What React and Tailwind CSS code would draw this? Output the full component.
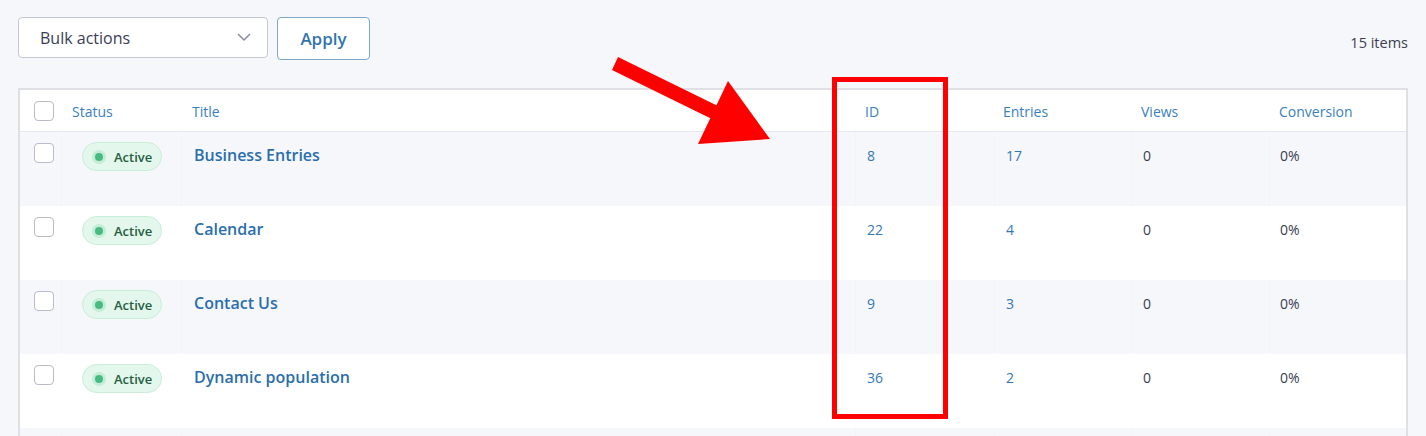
import React from "react";

const rows = [
  { title: "Business Entries", id: 8, entries: 17, views: 0, conversion: "0%" },
  { title: "Calendar", id: 22, entries: 4, views: 0, conversion: "0%" },
  { title: "Contact Us", id: 9, entries: 3, views: 0, conversion: "0%" },
  { title: "Dynamic population", id: 36, entries: 2, views: 0, conversion: "0%" },
];

const cols = "grid grid-cols-[41px_120px_1fr_139px_137px_138px_137px]";

function Checkbox() {
  return (
    <span className="block w-[20px] h-[20px] rounded-[4px] border-[1.5px] border-[#b9bbcc] bg-white" />
  );
}

function Badge() {
  return (
    <span className="inline-flex items-center h-[29px] w-[80px] rounded-full border border-[#c8eed9] bg-[#e3f7ed] pl-[9px] gap-[8px]">
      <span className="flex items-center justify-center w-[14px] h-[14px] rounded-full bg-[#c4ecd6]">
        <span className="w-[8px] h-[8px] rounded-full bg-[#48bb80]" />
      </span>
      <span className="text-[13px] font-semibold text-[#245f40] pt-[2px]">Active</span>
    </span>
  );
}

export default function App() {
  return (
    <div
      className="relative w-[1426px] h-[436px] overflow-hidden bg-[#f6f7fb] px-[18px] pt-[17px]"
      style={{ fontFamily: '"Open Sans", "Noto Sans", sans-serif' }}
    >
      {/* barra superior */}
      <div className="flex items-start gap-[9px]">
        <div className="flex items-center justify-between w-[250px] h-[41px] rounded-[4px] border border-[#c5c6d6] bg-white pl-[21px] pr-[16px]">
          <span className="text-[16px] text-[#3a3d55]">Bulk actions</span>
          <svg width="14" height="9" viewBox="0 0 14 9" fill="none">
            <path d="M1.5 1.5 L7 7 L12.5 1.5" stroke="#8c8fa8" strokeWidth="1.6" strokeLinecap="round" strokeLinejoin="round" />
          </svg>
        </div>
        <button className="w-[93px] h-[43px] rounded-[4px] border border-[#7ea6c7] bg-white text-[17px] font-semibold text-[#3275ad]">
          Apply
        </button>
        <span className="ml-auto mt-[15px] text-[14.5px] text-[#3c3f52]">15 items</span>
      </div>

      {/* tabla */}
      <div className="mt-[28px] border-2 border-[#dfe0e6] border-b-0 bg-white">
        <div className={`${cols} h-[42px] items-center border-b border-[#e6e7ee] bg-white text-[14px] text-[#3a80bf]`}>
          <div className="pl-[14px]">
            <Checkbox />
          </div>
          <div className="pl-[11px] pt-[1px]">Status</div>
          <div className="pl-[11px] pt-[1px]">Title</div>
          <div className="pl-[10px] pt-[1px]">ID</div>
          <div className="pl-[9px] pt-[1px]">Entries</div>
          <div className="pl-[10px] pt-[1px]">Views</div>
          <div className="pl-[10px] pt-[1px]">Conversion</div>
        </div>
        {rows.map((row, i) => {
          const line = i % 2 === 0 ? "border-[#f3f4f9]" : "border-white";
          return (
            <div
              key={row.id}
              className={`${cols} h-[74px] ${i % 2 === 0 ? "bg-[#f6f7fb]" : "bg-white"}`}
            >
              <div className="pl-[14px] pt-[11px]">
                <Checkbox />
              </div>
              <div className={`pl-[20px] pt-[10px] border-l ${line}`}>
                <Badge />
              </div>
              <div className={`pl-[12px] pt-[11px] border-l ${line}`}>
                <span className="text-[16px] font-semibold text-[#2b6eac]">{row.title}</span>
              </div>
              <div className={`pl-[11px] pt-[13px] text-[14px] text-[#3277b8] border-l ${line}`}>
                {row.id}
              </div>
              <div className={`pl-[11px] pt-[13px] text-[14px] text-[#3277b8] border-l ${line}`}>
                {row.entries}
              </div>
              <div className={`pl-[11px] pt-[13px] text-[14px] text-[#3a3d50] border-l ${line}`}>
                {row.views}
              </div>
              <div className={`pl-[10px] pt-[13px] text-[14px] text-[#3a3d50] border-l ${line}`}>
                {row.conversion}
              </div>
            </div>
          );
        })}
        <div className={`${cols} h-[74px] bg-[#f6f7fb]`}>
          <div />
          <div className="border-l border-[#f3f4f9]" />
          <div className="border-l border-[#f3f4f9]" />
          <div className="border-l border-[#f3f4f9]" />
          <div className="border-l border-[#f3f4f9]" />
          <div className="border-l border-[#f3f4f9]" />
          <div className="border-l border-[#f3f4f9]" />
        </div>
      </div>

      {/* anotación roja */}
      <div className="absolute left-[832px] top-[77px] w-[116px] h-[342px] border-[5px] border-[#ff0000]" />
      <svg className="absolute left-0 top-0" width="1426" height="436" viewBox="0 0 1426 436">
        <polygon points="612,70 618,57 724,109 718,122" fill="#ff0000" />
        <polygon points="728,81 698,144 770,139" fill="#ff0000" />
      </svg>
    </div>
  );
}
